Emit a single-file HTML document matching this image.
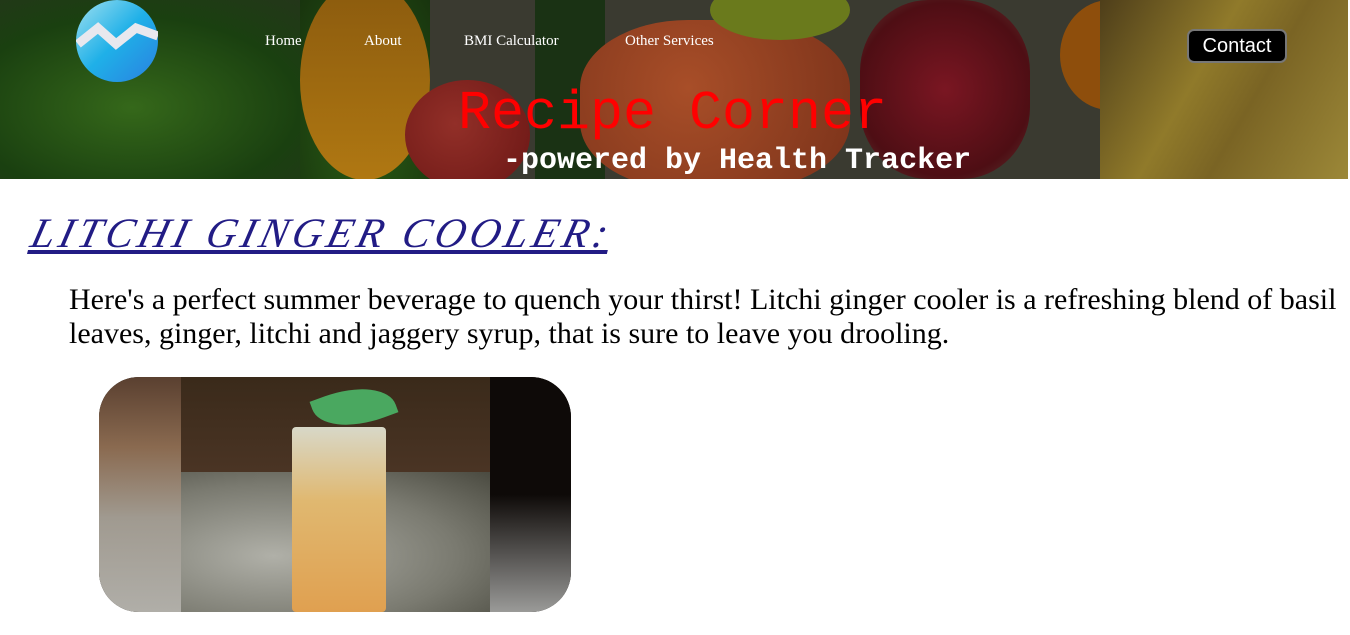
<!DOCTYPE html>
<html><head><meta charset="utf-8"><style>
*{margin:0;padding:0;box-sizing:border-box}
body{width:1350px;height:635px;overflow:hidden;background:#fff;font-family:"Liberation Serif",serif;position:relative}
.hdr{position:absolute;left:0;top:0;width:1348px;height:179px;overflow:hidden;background:#3a3a30}
.hdr div{position:absolute}
nav a{position:absolute;top:33px;color:#fff;font-size:15px;text-decoration:none}
</style></head><body>
<div class="hdr">
 <div style="left:0;top:0;width:330px;height:179px;background:radial-gradient(ellipse at 40% 60%,#35681a,#1a4010 60%,#26341c)"></div>
 <div style="left:300px;top:0;width:130px;height:179px;background:radial-gradient(ellipse at 50% 70%,#2a5e15,#18340e)"></div>
 <div style="left:300px;top:-20px;width:130px;height:200px;border-radius:50%;background:linear-gradient(#8a5a0e,#b07812)"></div>
 <div style="left:405px;top:80px;width:125px;height:110px;border-radius:50%;background:radial-gradient(circle at 40% 40%,#922f28,#6a1614)"></div>
 <div style="left:535px;top:0;width:70px;height:179px;background:#1a3214"></div>
 <div style="left:580px;top:20px;width:270px;height:170px;border-radius:40%;background:radial-gradient(circle at 40% 40%,#a84e28,#7a321a)"></div>
 <div style="left:710px;top:-20px;width:140px;height:60px;border-radius:50%;background:#6a7a1c"></div>
 <div style="left:860px;top:0;width:170px;height:179px;border-radius:40%;background:radial-gradient(circle,#7a1622,#4e0e14 70%,#5a3e36)"></div>
 <div style="left:1060px;top:0;width:100px;height:110px;border-radius:50%;background:#8e4e0c"></div>
 <div style="left:1100px;top:0;width:248px;height:179px;background:linear-gradient(120deg,#4e3e1a,#907a2a 40%,#7a6424 60%,#9c8838)"></div>
 <svg style="position:absolute;left:76px;top:0" width="82" height="82" viewBox="0 0 82 82"><defs><linearGradient id="g" x1="0" y1="0" x2="1" y2="1"><stop offset="0" stop-color="#9ee0f0"/><stop offset=".5" stop-color="#1fb0e8"/><stop offset="1" stop-color="#2a80e0"/></linearGradient></defs><ellipse cx="41" cy="41" rx="41" ry="41" fill="url(#g)"/><path d="M2 44 L22 28 L40 44 L60 28 L82 36" stroke="#e8e8ee" stroke-width="9" fill="none"/></svg>
 <nav><a style="left:265px">Home</a><a style="left:364px">About</a><a style="left:464px">BMI Calculator</a><a style="left:625px">Other Services</a></nav>
 <div style="left:1187px;top:29px;width:100px;height:34px;background:#000;border:2px solid #777;border-radius:7px;color:#fff;font:20px 'Liberation Sans',sans-serif;text-align:center;line-height:30px">Contact</div>
 <div style="left:458px;top:86px;color:#f00;font:55px 'Liberation Mono',monospace;line-height:55px">Recipe Corner</div>
 <div style="left:503px;top:145px;color:#fff;font:bold 30px 'Liberation Mono',monospace;line-height:32px">-powered by Health Tracker</div>
</div>
<div style="position:absolute;left:26px;top:210px;color:#221c85;font:italic 42px 'Liberation Serif',serif;letter-spacing:4.5px;text-decoration:underline;white-space:nowrap;transform:skewX(-14deg);transform-origin:left bottom">LITCHI GINGER COOLER:</div>
<p style="position:absolute;left:69px;top:283px;width:1280px;font-size:30px;line-height:34px;color:#000">Here's a perfect summer beverage to quench your thirst! Litchi ginger cooler is a refreshing blend of basil leaves, ginger, litchi and jaggery syrup, that is sure to leave you drooling.</p>
<div style="position:absolute;left:99px;top:377px;width:472px;height:235px;border-radius:40px;overflow:hidden;background:#100c08">
 <div style="position:absolute;left:0;top:0;width:82px;height:235px;background:linear-gradient(#5a4030,#8a6a50 30%,#a09a90 60%,#b0aea8)"></div>
 <div style="position:absolute;left:82px;top:0;width:309px;height:235px;background:linear-gradient(#3a2a1a,#4a3424 40%,#1a120c)"></div>
 <div style="position:absolute;left:82px;top:95px;width:309px;height:140px;background:radial-gradient(ellipse at 30% 60%,#b0b0a8,#7a7a70 60%,#4a4a40)"></div>
 <div style="position:absolute;left:391px;top:0;width:81px;height:235px;background:linear-gradient(#0e0a08 50%,#9a9a98)"></div>
 <div style="position:absolute;left:193px;top:50px;width:94px;height:185px;background:linear-gradient(#d8d8c8,#e0b870 40%,#e0a050);border-radius:4px"></div>
 <div style="position:absolute;left:215px;top:10px;width:80px;height:40px;background:#4aa860;border-radius:0 80% 0 80%;transform:rotate(-20deg)"></div>
</div>
</body></html>
